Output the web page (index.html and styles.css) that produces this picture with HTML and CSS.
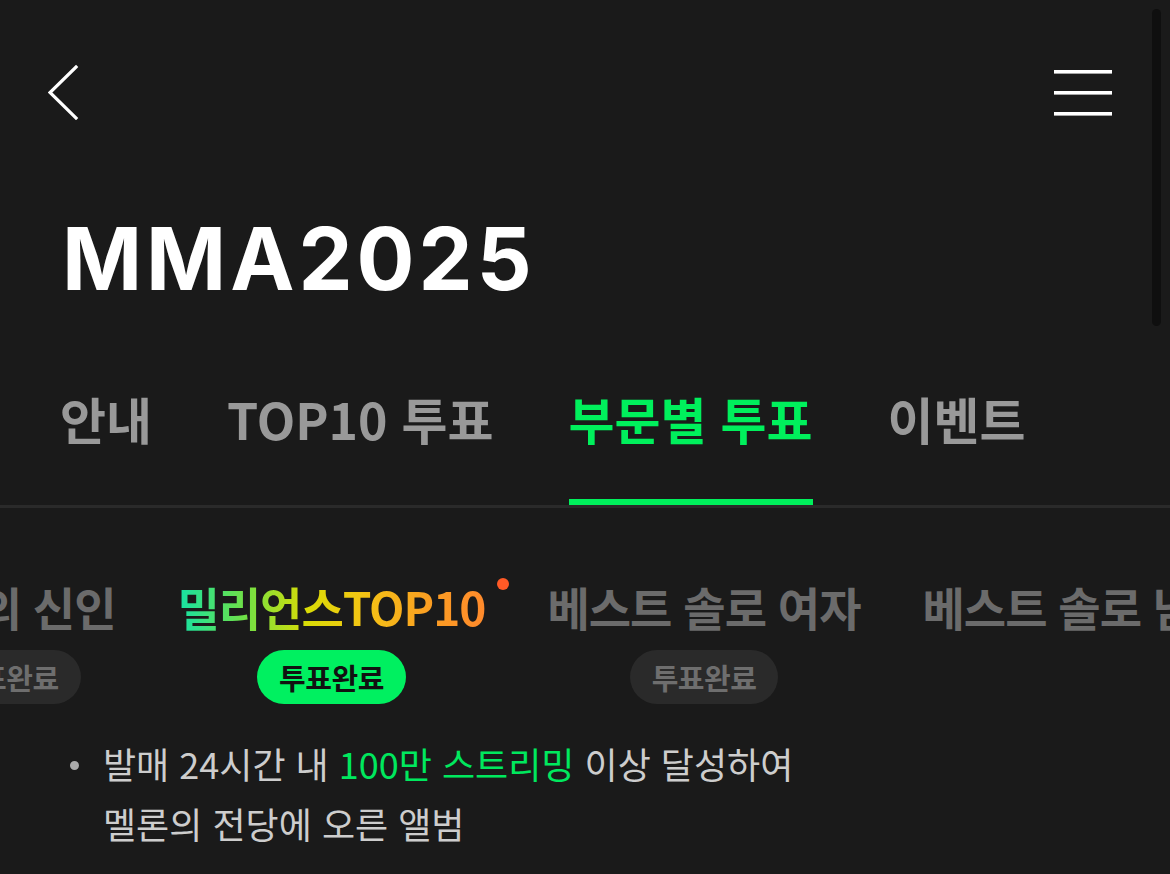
FILE: index.html
```html
<!DOCTYPE html>
<html lang="ko">
<head>
<meta charset="utf-8">
<title>MMA2025</title>
<link rel="stylesheet" href="styles.css">
</head>
<body>
<div class="page">
  <header class="topbar">
    <button class="icon-btn back" aria-label="뒤로">
      <svg width="32" height="56" viewBox="0 0 32 56"><polyline points="28,3 2,28.5 28,54" fill="none" stroke="#fff" stroke-width="3.2" stroke-linecap="square" stroke-linejoin="miter"/></svg>
    </button>
    <button class="icon-btn menu" aria-label="메뉴">
      <svg width="60" height="50" viewBox="0 0 60 50"><rect x="1" y="3" width="58" height="3.6" fill="#fff"/><rect x="1" y="24" width="58" height="3.6" fill="#fff"/><rect x="1" y="45" width="58" height="3.6" fill="#fff"/></svg>
    </button>
  </header>

  <h1 class="title">MMA2025</h1>

  <nav class="tabs">
    <a class="tab">안내</a>
    <a class="tab">TOP10 투표</a>
    <a class="tab active">부문별 투표</a>
    <a class="tab">이벤트</a>
  </nav>

  <div class="subtabs">
    <div class="subtabs-row">
      <div class="sub">
        <span class="sub-title">올해의 신인</span>
        <span class="pill">투표완료</span>
      </div>
      <div class="sub">
        <span class="sub-title gradient">밀리언스TOP10<i class="dot"></i></span>
        <span class="pill on">투표완료</span>
      </div>
      <div class="sub">
        <span class="sub-title">베스트 솔로 여자</span>
        <span class="pill">투표완료</span>
      </div>
      <div class="sub">
        <span class="sub-title">베스트 솔로 남자</span>
      </div>
    </div>
  </div>

  <ul class="desc">
    <li>발매 24시간 내 <em>100만 스트리밍</em> 이상 달성하여<br>멜론의 전당에 오른 앨범</li>
  </ul>

  <div class="scrollbar"></div>
</div>
</body>
</html>
```

FILE: styles.css
```css
* { box-sizing: border-box; }
html, body { margin: 0; padding: 0; }
body {
  background: #1a1a1a;
  width: 1170px;
  height: 874px;
  overflow: hidden;
  font-family: "Noto Sans CJK KR", "Noto Sans", sans-serif;
  color: #fff;
}
.page { position: relative; width: 1170px; height: 874px; overflow: hidden; }

.topbar {
  height: 184px;
  display: flex;
  align-items: center;
  justify-content: space-between;
  padding: 0 57px 0 48px;
}
.icon-btn {
  background: none;
  border: 0;
  padding: 0;
  display: flex;
  cursor: pointer;
}

.title {
  margin: 32px 0 0 62px;
  font-family: "Inter", "Liberation Sans", sans-serif;
  font-weight: 700;
  font-size: 86px;
  line-height: 86px;
  letter-spacing: 4px;
  color: #fff;
}

.tabs {
  margin-top: 86px;
  display: flex;
  gap: 75px;
  padding-left: 60px;
  border-bottom: 3px solid #2a2a2a;
}
.tab {
  font-size: 50px;
  font-weight: 700;
  line-height: 60px;
  color: #999;
  padding-bottom: 51px;
  border-bottom: 6px solid transparent;
  white-space: nowrap;
}
.tab.active { color: #00f05c; border-bottom-color: #00f05c; }

.subtabs {
  overflow: hidden;
  margin-top: 70px;
}
.subtabs-row {
  display: flex;
  gap: 62px;
  margin-left: -103px;
  width: max-content;
}
.sub {
  display: flex;
  flex-direction: column;
  align-items: center;
  gap: 16px;
}
.sub-title {
  position: relative;
  font-size: 46px;
  font-weight: 700;
  line-height: 56px;
  color: #6b6b6b;
  letter-spacing: -1px;
  white-space: nowrap;
}
.sub-title.gradient {
  background: linear-gradient(90deg, #14e2a6 0%, #6fe046 22%, #d9dc06 42%, #f3c514 60%, #fb9e22 82%, #ff8a2c 100%);
  -webkit-background-clip: text;
  background-clip: text;
  color: transparent;
}
.dot {
  position: absolute;
  right: -24px;
  top: 0;
  width: 12px;
  height: 12px;
  border-radius: 50%;
  background: #ff5a26;
}
.pill {
  height: 54px;
  padding: 0 22px;
  border-radius: 27px;
  background: #2a2a2a;
  color: #6e6e6e;
  font-size: 29px;
  font-weight: 700;
  line-height: 54px;
  letter-spacing: -0.5px;
  white-space: nowrap;
}
.pill.on { background: #00f060; color: #111; }

.desc {
  list-style: none;
  margin: 29px 0 0 0;
  padding: 0 0 0 103px;
  font-size: 36px;
  line-height: 60px;
  color: #cdcdcd;
  font-weight: 400;
}
.desc li { position: relative; }
.desc li::before {
  content: "";
  position: absolute;
  left: -33px;
  top: 28px;
  width: 9px;
  height: 9px;
  border-radius: 50%;
  background: #aaa;
}
.desc em { font-style: normal; color: #00e85e; }

.scrollbar {
  position: absolute;
  top: 9px;
  left: 1152px;
  width: 9px;
  height: 317px;
  border-radius: 5px;
  background: #0f0f0f;
}
```
